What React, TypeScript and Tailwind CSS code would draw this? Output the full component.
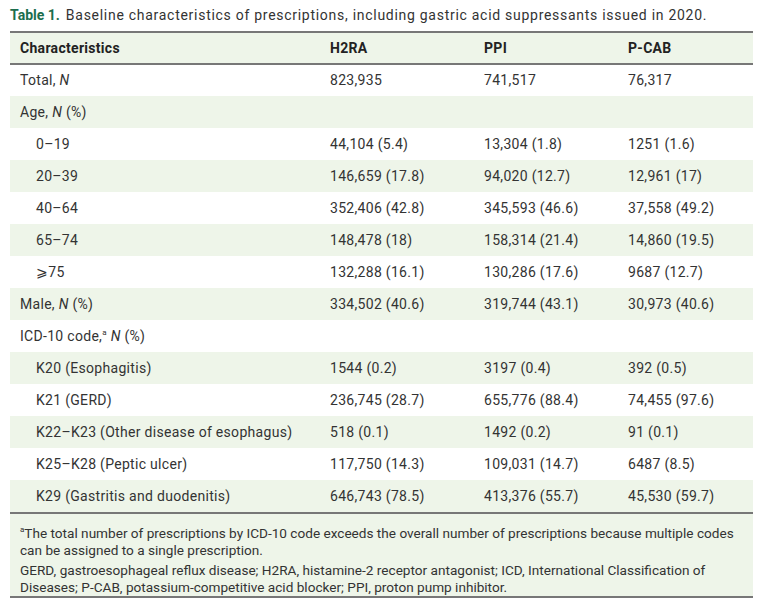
import React from 'react';

type Row = {
  label: React.ReactNode;
  indent?: boolean;
  h2ra?: string;
  ppi?: string;
  pcab?: string;
};

const N = () => <i>N</i>;

const rows: Row[] = [
  { label: <>Total, <N /></>, h2ra: '823,935', ppi: '741,517', pcab: '76,317' },
  { label: <>Age, <N /> (%)</> },
  { label: '0–19', indent: true, h2ra: '44,104 (5.4)', ppi: '13,304 (1.8)', pcab: '1251 (1.6)' },
  { label: '20–39', indent: true, h2ra: '146,659 (17.8)', ppi: '94,020 (12.7)', pcab: '12,961 (17)' },
  { label: '40–64', indent: true, h2ra: '352,406 (42.8)', ppi: '345,593 (46.6)', pcab: '37,558 (49.2)' },
  { label: '65–74', indent: true, h2ra: '148,478 (18)', ppi: '158,314 (21.4)', pcab: '14,860 (19.5)' },
  { label: '⩾75', indent: true, h2ra: '132,288 (16.1)', ppi: '130,286 (17.6)', pcab: '9687 (12.7)' },
  { label: <>Male, <N /> (%)</>, h2ra: '334,502 (40.6)', ppi: '319,744 (43.1)', pcab: '30,973 (40.6)' },
  { label: <>ICD-10 code,<span className="text-[8px] align-super leading-none">a</span> <N /> (%)</> },
  { label: 'K20 (Esophagitis)', indent: true, h2ra: '1544 (0.2)', ppi: '3197 (0.4)', pcab: '392 (0.5)' },
  { label: 'K21 (GERD)', indent: true, h2ra: '236,745 (28.7)', ppi: '655,776 (88.4)', pcab: '74,455 (97.6)' },
  { label: 'K22–K23 (Other disease of esophagus)', indent: true, h2ra: '518 (0.1)', ppi: '1492 (0.2)', pcab: '91 (0.1)' },
  { label: 'K25–K28 (Peptic ulcer)', indent: true, h2ra: '117,750 (14.3)', ppi: '109,031 (14.7)', pcab: '6487 (8.5)' },
  { label: 'K29 (Gastritis and duodenitis)', indent: true, h2ra: '646,743 (78.5)', ppi: '413,376 (55.7)', pcab: '45,530 (59.7)' },
];

export default function App() {
  return (
    <div className="w-[764px] h-[606px] bg-white px-[10px] pt-[6px] text-[#333] font-['Roboto',sans-serif]">
      <p className="text-[14px] leading-[18px] h-[25px] whitespace-nowrap">
        <span className="font-bold text-[#1b6e4e]">Table 1.</span>
        <span className="ml-[6px] tracking-[0.72px]">Baseline characteristics of prescriptions, including gastric acid suppressants issued in 2020.</span>
      </p>
      <table className="w-[743px] border-collapse text-[14px] tracking-[0.3px] table-fixed">
        <colgroup>
          <col className="w-[310px]" />
          <col className="w-[154px]" />
          <col className="w-[144px]" />
          <col className="w-[135px]" />
        </colgroup>
        <thead>
          <tr className="bg-[#eef5e9] border-y-2 border-[#777] h-[32px] font-bold text-[#222]">
            <th className="text-left pl-[10px]">Characteristics</th>
            <th className="text-left pl-[10px]">H2RA</th>
            <th className="text-left pl-[10px]">PPI</th>
            <th className="text-left pl-[10px]">P-CAB</th>
          </tr>
        </thead>
        <tbody>
          {rows.map((r, i) => (
            <tr key={i} className={`h-[32px] ${i % 2 === 1 ? 'bg-[#eef5e9]' : 'bg-white'}`}>
              <td className={r.indent ? 'pl-[26px]' : 'pl-[10px]'}>{r.label}</td>
              <td className="pl-[10px]">{r.h2ra}</td>
              <td className="pl-[10px]">{r.ppi}</td>
              <td className="pl-[10px]">{r.pcab}</td>
            </tr>
          ))}
        </tbody>
      </table>
      <div className="w-[743px] bg-[#eef5e9] border-y-2 border-[#777] pl-[10px] pr-[10px] pt-[11px] pb-[1px] text-[13.6px] leading-[16.5px]">
        <p className="mb-[4px]">
          <span className="text-[8px] align-super leading-none">a</span>The total number of prescriptions by ICD-10 code exceeds the overall number of prescriptions because multiple codes can be assigned to a single prescription.
        </p>
        <p>
          GERD, gastroesophageal reflux disease; H2RA, histamine-2 receptor antagonist; ICD, International Classification of Diseases; P-CAB, potassium-competitive acid blocker; PPI, proton pump inhibitor.
        </p>
      </div>
    </div>
  );
}
